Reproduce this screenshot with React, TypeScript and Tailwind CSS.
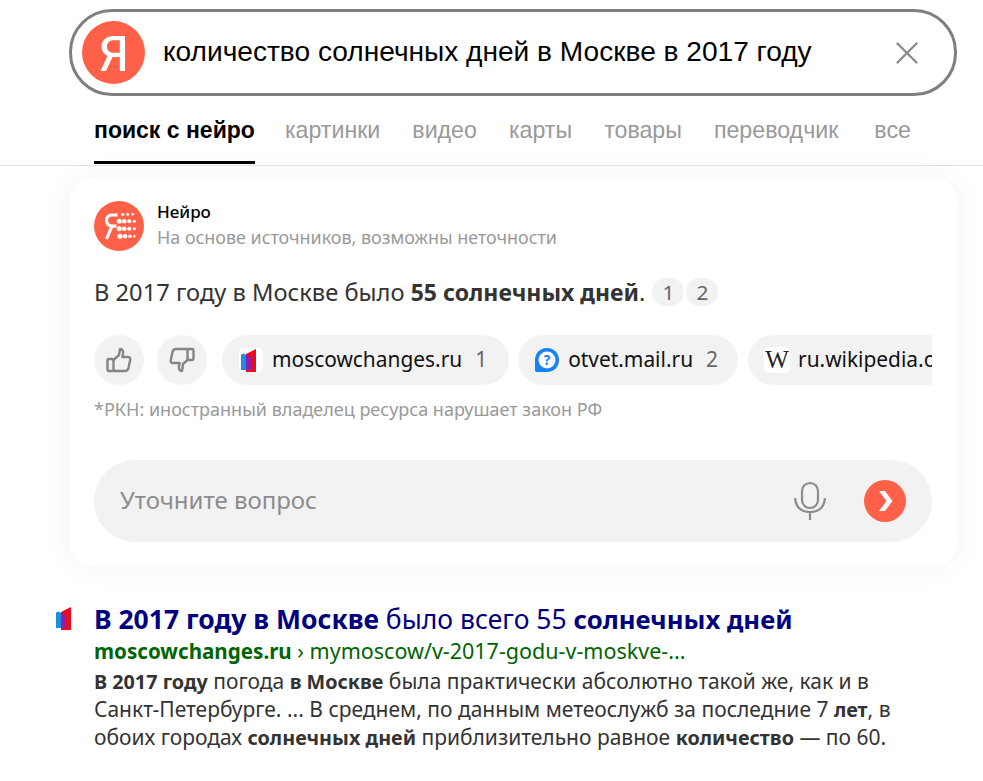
import { X } from "lucide-react";

const YS = "font-['Noto_Sans','Open_Sans',sans-serif]";

const TABS = ["картинки", "видео", "карты", "товары", "переводчик"];

function MoscowIcon({ size }: { size: number }) {
  return (
    <svg width={size} height={size} viewBox="0 0 24 24">
      <path d="M2 6.5 L5 5.5 L7 7 V22 H2 Z" fill="#1a8ee0" />
      <path d="M7 6 L17 1 V24 H7 Z" fill="#ee0a1e" />
      <path d="M7 7 L12 9.5 V22 H7 Z" fill="#8a1fb0" />
    </svg>
  );
}

function YandexLogo() {
  return (
    <svg width="63" height="63" viewBox="0 0 63 63" className="shrink-0">
      <circle cx="31.5" cy="31.5" r="31.5" fill="#ff6148" />
      <path
        fillRule="evenodd"
        d="M43 15 H32 C24 15 19.5 19.5 19.5 25.5 C19.5 30 21.5 33 25.5 35 L18.5 50 H24 L30.5 36 H37.8 V50 H43 Z M37.8 19.3 H32 C27.5 19.3 25 21.8 25 25.5 C25 29.5 27.5 31.8 32 31.8 H37.8 Z"
        fill="#fff"
      />
    </svg>
  );
}

function NeuroLogo() {
  const dots = [
    [28.7, 13.3, 1.6], [33.7, 13.3, 1.5], [38.7, 13.3, 1.2],
    [25.3, 20.3, 2.5], [30.3, 20.3, 2.3], [35.3, 20.3, 2], [40.3, 20.3, 1.5],
    [25.3, 27.7, 2.5], [30.3, 27.7, 2.3], [35.3, 27.7, 2], [40.3, 27.7, 1.5],
    [26, 35.3, 2.5], [31, 35.3, 2.3], [36, 35.3, 1.8], [40.3, 35.3, 1.2],
  ];
  return (
    <svg width="50" height="50" viewBox="0 0 50 50" className="shrink-0">
      <circle cx="25" cy="25" r="25" fill="#ff6148" />
      <path
        fill="none"
        stroke="#fff"
        strokeWidth="3.2"
        d="M23.5 14 H18 C14.5 14 12.5 16.3 12.5 19.5 C12.5 23 14.8 25.2 18.5 25.2 H22.5 M18 25 L12.5 38"
      />
      {dots.map(([x, y, r], i) => (
        <circle key={i} cx={x} cy={y} r={r} fill="#fff" />
      ))}
    </svg>
  );
}

function ThumbUp() {
  return (
    <svg width="28" height="28" viewBox="0 0 28 28" fill="none" stroke="#858585" strokeWidth="2.4" strokeLinejoin="round">
      <rect x="2.5" y="13" width="6" height="12" rx="1.5" />
      <path d="M8.5 14 L14 9 L15 3 C17.5 3 18.5 5 18 8 L17.3 11 H23 C25 11 25.6 12.5 25.2 14 L23.5 22 C23 24 22 25 20 25 H8.5" />
    </svg>
  );
}

function ThumbDown() {
  return (
    <svg width="28" height="28" viewBox="0 0 28 28" fill="none" stroke="#858585" strokeWidth="2.4" strokeLinejoin="round">
      <rect x="19.5" y="3" width="6" height="11" rx="1.5" />
      <path d="M19.5 14 L15 18 L14 25 C11.5 25 10.5 23 11 20 L11.7 17 H5 C3 17 2.4 15.5 2.8 14 L4.5 6 C5 4 6 3 8 3 H19.5" />
    </svg>
  );
}

function SourceChip({ icon, name, num, className }: { icon: React.ReactNode; name: string; num?: string; className?: string }) {
  return (
    <div className={`flex h-[50px] shrink-0 items-center rounded-[25px] bg-[#f2f2f2] pl-4 ${className ?? ""}`}>
      <div className="flex h-[26px] w-[26px] items-center justify-center">{icon}</div>
      <span className="ml-[8px] text-[20.9px] text-[#111]">{name}</span>
      {num && <span className="ml-[13px] text-[20.9px] text-[#666]">{num}</span>}
    </div>
  );
}

export default function App() {
  return (
    <div className={`h-[781px] w-[983px] overflow-hidden bg-white ${YS}`}>
      {/* Search header */}
      <header className="h-[166px] border-b border-[#e3e3e3] bg-white pl-[69px] pr-[26px] pt-[9px]">
        <div className="flex h-[87px] items-center rounded-[43px] border-[3px] border-[#7f7f7f] pl-[10px] pr-[28px]">
          <YandexLogo />
          <div className="ml-[18px] flex-1 whitespace-nowrap font-['Liberation_Sans',sans-serif] text-[28.1px] text-black">
            количество солнечных дней в Москве в 2017 году
          </div>
          <X size={38} strokeWidth={1.5} className="text-[#8a8a8a]" />
        </div>
        <nav className="mt-[14px] flex gap-[32px] pl-[25px] font-['Liberation_Sans',sans-serif] text-[23.2px] text-[#999]">
          <div className="mr-[-2px] h-[54px] border-b-[3px] border-black pt-[3px] text-[23px] font-bold text-black">поиск с нейро</div>
          {TABS.map((tab) => (
            <div key={tab} className="pt-[3px]">{tab}</div>
          ))}
          <div className="ml-[4px] pt-[3px]">все</div>
        </nav>
      </header>

      {/* Neuro card */}
      <section className="ml-[69px] mt-[11px] h-[390px] w-[888px] rounded-[24px] bg-white px-[25px] pt-[24px] shadow-[0_0_30px_rgba(0,0,0,0.05)]">
        <div className="flex items-center gap-[13px]">
          <NeuroLogo />
          <div className="-mt-[3px]">
            <div className="text-[17px] font-medium leading-[24px] text-black">Нейро</div>
            <div className="text-[17.9px] leading-[26px] text-[#999]">На основе источников, возможны неточности</div>
          </div>
        </div>

        <div className="mt-[25px] flex items-center text-[23.7px] leading-[32px] text-[#333]">
          <span>В 2017 году в Москве было <b className="text-[23px] font-bold">55 солнечных дней</b>.</span>
          <span className="ml-[7px] flex h-[28px] w-[32px] items-center justify-center rounded-full bg-[#f2f2f2] text-[20.8px] text-[#666]">1</span>
          <span className="ml-[2px] flex h-[28px] w-[32px] items-center justify-center rounded-full bg-[#f2f2f2] text-[20.8px] text-[#666]">2</span>
        </div>

        <div className="mt-[27px] flex items-center overflow-hidden">
          <div className="flex h-[50px] w-[50px] shrink-0 items-center justify-center rounded-full bg-[#f2f2f2]"><ThumbUp /></div>
          <div className="ml-[13px] flex h-[50px] w-[50px] shrink-0 items-center justify-center rounded-full bg-[#f2f2f2]"><ThumbDown /></div>
          <SourceChip className="ml-[15px] pr-[22px]" icon={<span className="flex h-[24px] w-[24px] items-center justify-center rounded-[5px] bg-white"><MoscowIcon size={24} /></span>} name="moscowchanges.ru" num="1" />
          <SourceChip
            className="ml-[9px] pr-[20px]"
            icon={
              <svg width="26" height="26" viewBox="0 0 26 26">
                <path d="M13 1 C20 1 25 6 25 13 C25 20 20 25 13 25 H3 C1.5 25 1 24 1 23 V13 C1 6 6 1 13 1 Z" fill="#1582f5" />
                <circle cx="13" cy="13" r="8.5" fill="#fff" />
                <text x="13" y="18" textAnchor="middle" fontSize="14" fontWeight="700" fill="#1582f5">?</text>
              </svg>
            }
            name="otvet.mail.ru"
            num="2"
          />
          <SourceChip
            className="ml-[10px] pr-[22px]"
            icon={<span className="flex h-[26px] w-[26px] items-center justify-center rounded-[6px] bg-white font-['Liberation_Serif',serif] text-[25px] text-[#222]">W</span>}
            name="ru.wikipedia.org"
          />
        </div>

        <div className="mt-[11px] text-[18px] leading-[26px] text-[#999]">*РКН: иностранный владелец ресурса нарушает закон РФ</div>

        <div className="mt-[38px] flex h-[82px] items-center rounded-[41px] bg-[#f2f2f2] pl-[26px] pr-[26px]">
          <span className="-mt-[2px] flex-1 text-[24px] text-[#8c8c8c]">Уточните вопрос</span>
          <svg width="32" height="40" viewBox="0 0 32 40" fill="none" stroke="#8c8c8c" strokeWidth="2.2">
            <rect x="8" y="2" width="16" height="25" rx="8" />
            <path d="M1 17 C2 27 8 31 16 31 C24 31 30 27 31 17" />
            <path d="M16 31 V39" />
          </svg>
          <div className="ml-[38px] flex h-[42px] w-[42px] items-center justify-center rounded-full bg-[#ff6148]">
            <svg width="14" height="20" viewBox="0 0 14 20" fill="#fff" className="ml-[2px]">
              <path d="M0 0 H6 L13.5 10 L6 20 H0 L7.5 10 Z" />
            </svg>
          </div>
        </div>
      </section>

      {/* First result */}
      <article className="ml-[54px] mt-[32px] flex">
        <div className="w-[40px] shrink-0 pt-[7px]"><MoscowIcon size={24} /></div>
        <div className="w-[808px]">
          <h2 className="whitespace-nowrap text-[26.5px] leading-[40px] text-[#000080]"><b className="font-bold">В 2017 году в Москве</b> было всего 55 <b className="text-[25.7px] font-bold">солнечных дней</b></h2>
          <div className="-mt-[1px] whitespace-nowrap text-[21.5px] leading-[24px] text-[#006400]"><b className="text-[20.6px] font-bold">moscowchanges.ru</b> › mymoscow/v-2017-godu-v-moskve-...</div>
          <p className="mt-[4px] text-[21px] leading-[28px] text-[#333] [&_b]:text-[19.8px] [&_b]:leading-none">
            <b>В 2017 году</b> погода <b>в Москве</b> была практически абсолютно такой же, как и в Санкт-Петербурге. ... В среднем, по данным метеослужб за последние 7 <b>лет</b>, в обоих городах <b>солнечных дней</b> приблизительно равное <b>количество</b> — по 60.
          </p>
        </div>
      </article>
    </div>
  );
}
